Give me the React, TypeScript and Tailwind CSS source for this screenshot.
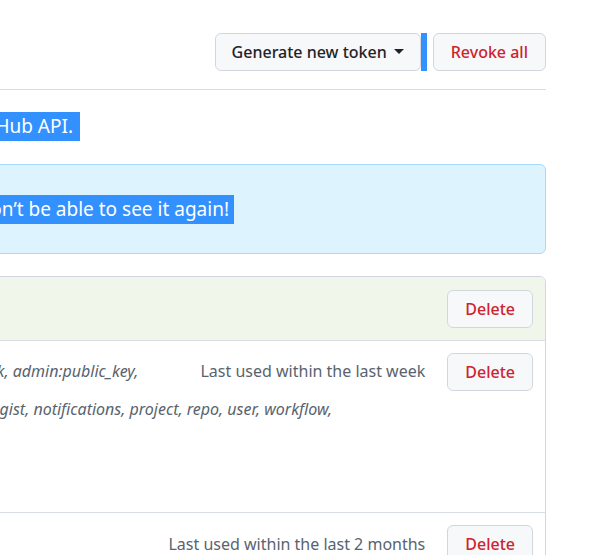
export default function App() {
  const btn =
    "h-[38px] rounded-[6px] border border-[#d0d7de] bg-[#f6f8fa] font-medium text-[16px] flex items-center shrink-0";

  return (
    <div
      className="min-h-screen bg-white overflow-hidden text-[#1f2328]"
      style={{ fontFamily: '"Noto Sans", "Open Sans", sans-serif' }}
    >
      <div className="ml-[-454px] w-[1000px]">
        {/* header */}
        <div className="flex justify-end items-center pt-[33px] pb-[18px] border-b border-[#d8dee4]">
          <button className={`${btn} px-[16px]`}>
            Generate new token
            <svg width="10" height="6" viewBox="0 0 10 6" className="ml-[7px]">
              <polygon points="0,0 10,0 5,5" fill="#1f2328" />
            </svg>
          </button>
          <span className="w-[6px] h-[38px] bg-[#3390ff] mr-[6px]" />
          <button className={`${btn} px-[17px] text-[#cf222e]`}>Revoke all</button>
        </div>

        <div className="mt-[22px] flex justify-end pr-[466px] whitespace-nowrap">
          <span className="bg-[#3390ff] text-white text-[19px] leading-[29px] pr-[7px]">
            Tokens you have generated that can be used to access the GitHub API.
          </span>
        </div>

        <div className="mt-[23px] rounded-[6px] border border-[#a9d8fd] bg-[#ddf4ff] pt-[30px] pb-[29px] flex justify-end pr-[311px] whitespace-nowrap">
          <span className="bg-[#3390ff] text-white text-[19px] leading-[29px] pr-[5px]">
            Make sure to copy your personal access token now. You won’t be able to see it again!
          </span>
        </div>

        {/* token list */}
        <div className="mt-[22px] rounded-[6px] border border-[#d0d7de] overflow-hidden">
          <div className="bg-[#f0f7ea] flex justify-end pt-[13px] pb-[12px] pr-[12px] border-b border-[#d8dee4]">
            <button className={`${btn} px-[17px] text-[#cf222e]`}>Delete</button>
          </div>

          <div className="grid grid-cols-[1fr_auto_auto] pt-[12px] pb-[10px] pr-[12px] text-[16px] leading-[37px] border-b border-[#d8dee4]">
            <div className="flex justify-end pr-[27px] whitespace-nowrap italic text-[#59636e]">
              admin:gpg_key, admin:org, admin:org_hook, admin:public_key,
            </div>
            <div className="w-[260px] text-right text-[#59636e]">Last used within the last week</div>
            <div className="ml-[22px]">
              <button className={`${btn} px-[17px] text-[#cf222e]`}>Delete</button>
            </div>
            <div className="col-span-3 flex justify-end pr-[201px] whitespace-nowrap italic text-[#59636e]">
              admin:repo_hook, codespace, copilot, delete_repo, gist, notifications, project, repo, user, workflow,
            </div>
            <div className="col-span-3 flex justify-end pr-[620px] whitespace-nowrap italic text-[#59636e]">
              write:discussion, write:packages
            </div>
            <div className="col-span-3 flex justify-end pr-[640px] whitespace-nowrap italic text-[#59636e]">
              delete:packages
            </div>
          </div>

          <div className="flex justify-end items-center pt-[12px] pb-[12px] pr-[12px]">
            <span className="text-[16px] text-[#59636e]">Last used within the last 2 months</span>
            <button className={`${btn} ml-[22px] px-[17px] text-[#cf222e]`}>Delete</button>
          </div>
        </div>
      </div>
    </div>
  );
}
